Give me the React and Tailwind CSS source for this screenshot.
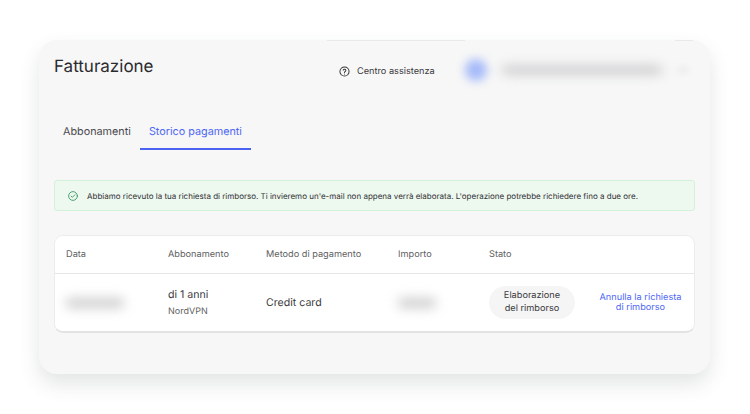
import React from "react";

const font = { fontFamily: '"Inter", "Liberation Sans", sans-serif' };
const cols = "grid grid-cols-[102px_98px_132px_91px_100px_1fr] pl-[11px] pr-3 items-center";

function HelpIcon() {
  return (
    <svg width="11" height="11" viewBox="0 0 24 24" fill="none" stroke="#3a3a3d" strokeWidth="2.2" strokeLinecap="round" strokeLinejoin="round">
      <circle cx="12" cy="12" r="10" />
      <path d="M9.1 9a3 3 0 0 1 5.8 1c0 2-3 2.6-3 4" />
      <path d="M12 17.6h.01" />
    </svg>
  );
}

function CheckIcon() {
  return (
    <svg width="10" height="10" viewBox="0 0 24 24" fill="none" stroke="#3f9a66" strokeWidth="2.2" strokeLinecap="round" strokeLinejoin="round">
      <circle cx="12" cy="12" r="10.5" />
      <path d="M7.5 12.3l3 3 6-6.3" />
    </svg>
  );
}

export default function App() {
  return (
    <div className="w-[750px] h-[414px] bg-white overflow-hidden pt-10 pl-[39px] antialiased [text-rendering:geometricPrecision]" style={font}>
      <div className="relative w-[671px] h-[334px] bg-[#f7f7f7] rounded-[18px] shadow-[0_10px_20px_rgba(60,70,70,0.14)] pl-[15px] pr-[15px]">
        <div className="absolute top-0 left-[288px] w-[138px] h-px bg-[#e9e9e9]" />
        <div className="absolute top-0 left-[636px] w-[18px] h-px bg-[#e9e9e9]" />
        <div className="flex items-start h-[56px]">
          <h1 className="text-[17px] leading-[22px] mt-[16px] font-normal text-[#2b2b2f] w-[285px] shrink-0">Fatturazione</h1>
          <div className="flex items-center gap-[7px] mt-[25px] h-[13px] w-[108px] shrink-0 text-[9.2px] text-[#3a3a3d]">
            <HelpIcon />
            <span className="whitespace-nowrap">Centro assistenza</span>
          </div>
          <div className="flex items-center mt-[19px] ml-[18px]">
            <div className="w-[22px] h-[22px] rounded-full bg-[#a5baf9] blur-[5px]" />
            <div className="w-[160px] h-[8px] ml-[15px] rounded bg-[#c6c7c9] blur-[6px]" />
            <div className="w-[10px] h-[4px] ml-[16px] rounded bg-[#e4e4e5] blur-[3px]" />
          </div>
        </div>

        <div className="flex mt-[20px] h-[34px]">
          <div className="px-[9px] pt-[9px] text-[10.8px] leading-[14px] text-[#4a4a4e]">Abbonamenti</div>
          <div className="px-[9px] pt-[9px] text-[10.8px] leading-[14px] text-[#4f68f5] border-b-2 border-[#4a63f0]">Storico pagamenti</div>
        </div>

        <div className="flex items-center gap-[9px] mt-[30px] h-[31px] pl-[13px] bg-[#edf8ef] border border-[#d3f1d8] rounded-[3px] text-[8px] text-[#2f2f33] whitespace-nowrap">
          <CheckIcon />
          <span>Abbiamo ricevuto la tua richiesta di rimborso. Ti invieremo un'e-mail non appena verrà elaborata. L'operazione potrebbe richiedere fino a due ore.</span>
        </div>

        <div className="mt-6 h-[98px] bg-white rounded-[9px] border border-[#ececec] border-b-2 border-b-[#e3e3e3]">
          <div className={`${cols} h-[38px] border-b border-[#e6e6e6] text-[9.2px] text-[#5f5f63]`}>
            <span>Data</span>
            <span>Abbonamento</span>
            <span>Metodo di pagamento</span>
            <span>Importo</span>
            <span>Stato</span>
            <span />
          </div>
          <div className={`${cols} h-[58px]`}>
            <div className="w-[58px] h-[10px] rounded bg-[#cdcdce] blur-[6px]" />
            <div>
              <div className="text-[10.6px] leading-[14px] text-[#3a3a3d]">di 1 anni</div>
              <div className="text-[9px] leading-[12px] mt-[4px] text-[#5f5f63]">NordVPN</div>
            </div>
            <div className="text-[10.6px] text-[#3a3a3d]">Credit card</div>
            <div className="w-[38px] h-[10px] rounded bg-[#cdcdce] blur-[6px]" />
            <div className="w-[86px] h-[33px] mb-[2px] rounded-full bg-[#f5f5f5] flex items-center justify-center text-center text-[9.2px] leading-[13.5px] text-[#3a3a3d]">
              Elaborazione<br />del rimborso
            </div>
            <div className="text-center text-[9.2px] leading-[10px] text-[#4f68f5] pl-[10px] whitespace-nowrap">
              Annulla la richiesta<br />di rimborso
            </div>
          </div>
        </div>
      </div>
    </div>
  );
}
